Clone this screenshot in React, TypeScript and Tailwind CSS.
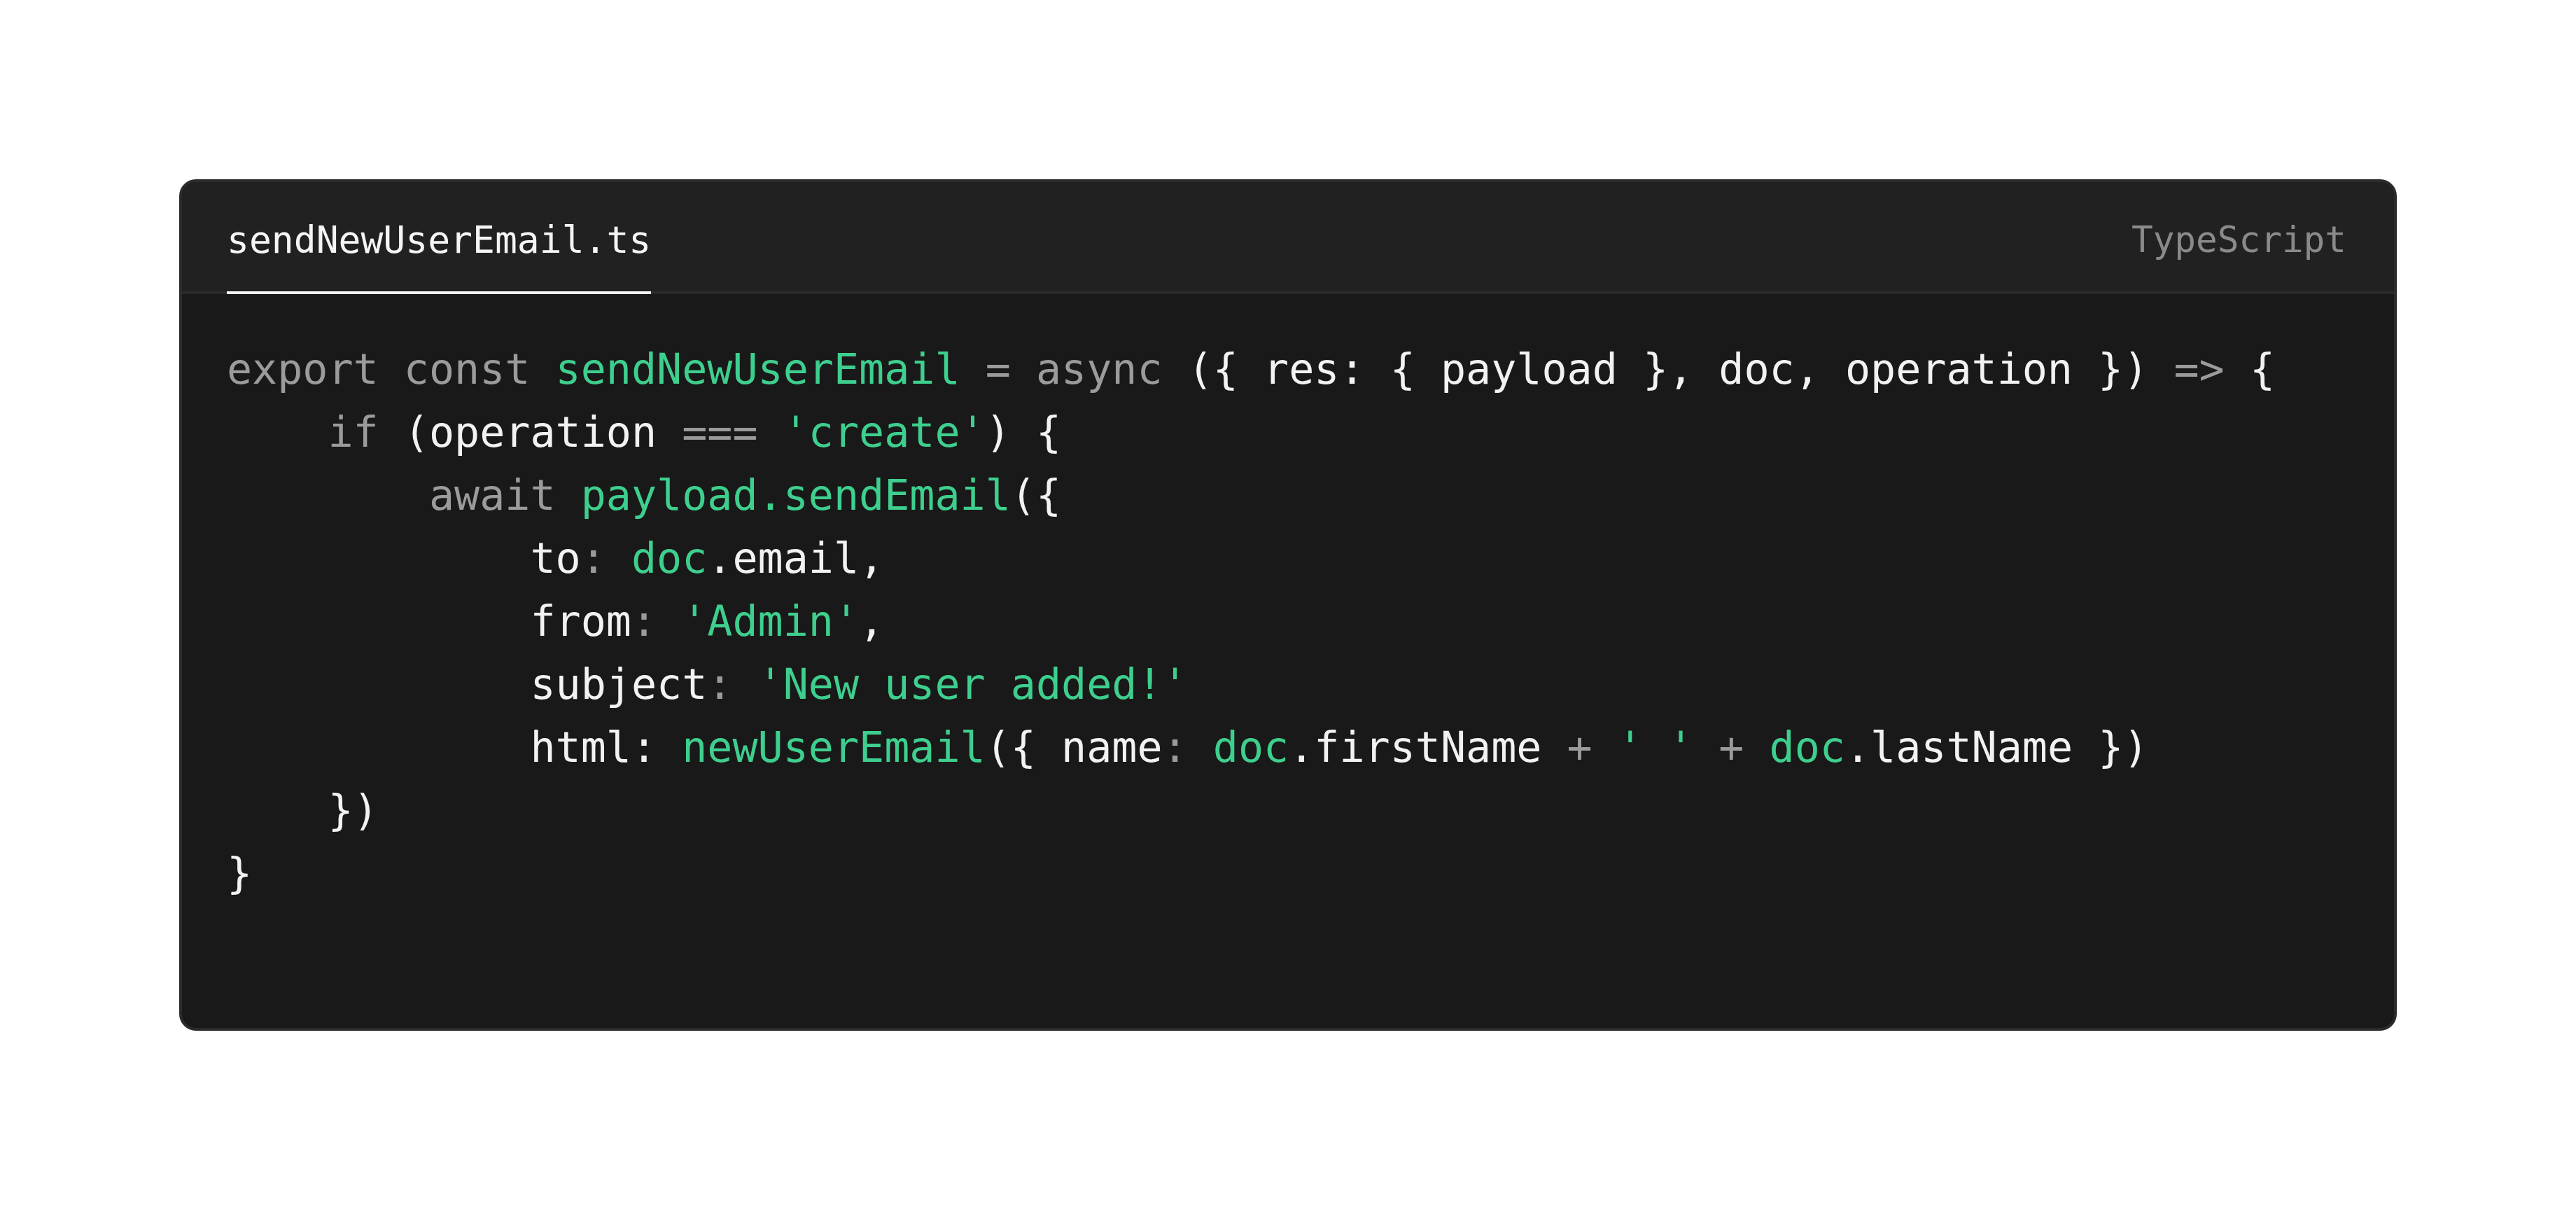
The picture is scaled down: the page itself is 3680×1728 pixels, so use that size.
import React from "react";

type Tok = [string, "k" | "g" | "w"];

const cls: Record<string, string> = {
  k: "text-[#9b9b9b]",
  g: "text-[#3ecf8e]",
  w: "text-[#f2f2f2]",
};

const lines: Tok[][] = [
  [
    ["export const ", "k"],
    ["sendNewUserEmail", "g"],
    [" = async ", "k"],
    ["({ res: { payload }, doc, operation })", "w"],
    [" => ", "k"],
    ["{", "w"],
  ],
  [
    ["    if ", "k"],
    ["(operation", "w"],
    [" === ", "k"],
    ["'create'", "g"],
    [") {", "w"],
  ],
  [
    ["        await ", "k"],
    ["payload.sendEmail", "g"],
    ["({", "w"],
  ],
  [
    ["            to", "w"],
    [": ", "k"],
    ["doc", "g"],
    [".email,", "w"],
  ],
  [
    ["            from", "w"],
    [": ", "k"],
    ["'Admin'", "g"],
    [",", "w"],
  ],
  [
    ["            subject", "w"],
    [": ", "k"],
    ["'New user added!'", "g"],
  ],
  [
    ["            html: ", "w"],
    ["newUserEmail", "g"],
    ["({ name", "w"],
    [": ", "k"],
    ["doc", "g"],
    [".firstName", "w"],
    [" + ", "k"],
    ["' '", "g"],
    [" + ", "k"],
    ["doc", "g"],
    [".lastName })", "w"],
  ],
  [["    })", "w"]],
  [["}", "w"]],
];

export default function App() {
  return (
    <div className="w-full h-[1728px] bg-white p-[256px] font-['DejaVu_Sans_Mono',monospace]">
      <div className="h-full flex flex-col rounded-[24px] border-4 border-[#2b2b2b] bg-[#191919] overflow-hidden">
        <div className="h-[160px] flex items-stretch justify-between px-16 bg-[#212121] shadow-[inset_0_-4px_0_#2a2a2a]">
          <div className="flex items-center pt-2 border-b-4 border-[#f5f5f5] text-[53px] text-[#f5f5f5] leading-none">
            sendNewUserEmail.ts
          </div>
          <div className="flex items-center pt-2 pb-1 pr-1 text-[51px] text-[#8a8a8a] leading-none">
            TypeScript
          </div>
        </div>
        <div className="flex-1 px-16 pt-[62px] text-[60px] leading-[90px]">
          {lines.map((line, i) => (
            <div key={i} className="whitespace-pre">
              {line.map(([t, c], j) => (
                <span key={j} className={cls[c]}>
                  {t}
                </span>
              ))}
            </div>
          ))}
        </div>
      </div>
    </div>
  );
}
